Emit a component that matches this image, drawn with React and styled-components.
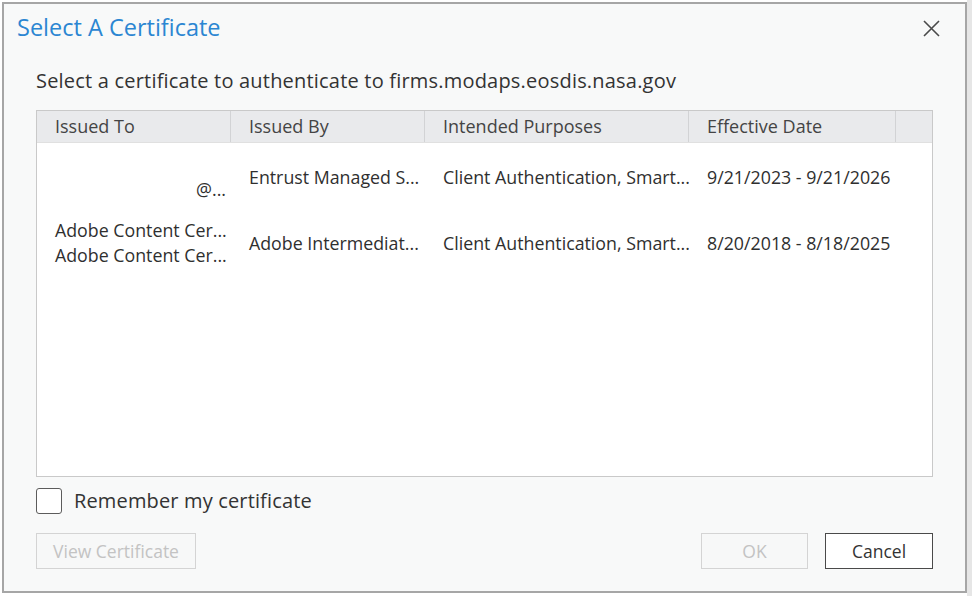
import React from "react";
import styled, { createGlobalStyle } from "styled-components";

const Global = createGlobalStyle`
  html, body { margin: 0; padding: 0; background: #ffffff; }
  body { font-family: "Open Sans", "Noto Sans", sans-serif; }
`;

const Page = styled.div`
  width: 972px;
  height: 596px;
  padding: 2px 0 0 2px;
  box-sizing: border-box;
  display: flex;
  background: linear-gradient(to right, #ffffff 967px, #e6e6e6 967px);
`;

const Dialog = styled.div`
  width: 965px;
  height: 591px;
  box-sizing: border-box;
  border: 2px solid #a6a6a6;
  background: #f8f9f9;
  display: flex;
  flex-direction: column;
  color: #333;
`;

const TitleBar = styled.div`
  display: flex;
  justify-content: space-between;
  align-items: flex-start;
  padding: 7px 24px 0 13px;
  height: 43px;
`;

const Title = styled.h1`
  margin: 0;
  font-weight: 400;
  font-size: 23.5px;
  line-height: 32px;
  color: #2b86d2;
`;

const Close = styled.button`
  border: 0;
  background: none;
  padding: 0;
  margin-top: 8px;
  width: 19px;
  height: 19px;
  display: flex;
`;

const Body = styled.div`
  padding: 0 32px;
  display: flex;
  flex-direction: column;
`;

const Prompt = styled.p`
  margin: 13px 0 0 0;
  font-size: 20px;
  line-height: 28px;
  letter-spacing: 0.2px;
  color: #333;
`;

const Table = styled.div`
  margin-top: 15px;
  height: 367px;
  box-sizing: border-box;
  border: 1px solid #c9c9c9;
  background: #ffffff;
  display: flex;
  flex-direction: column;
`;

const cols = "194px 194px 264px 207px 1fr";

const HeaderRow = styled.div`
  display: grid;
  grid-template-columns: ${cols};
  height: 31px;
  background: #e9eaec;
  border-bottom: 1px solid #e0e0e0;
`;

const HeaderCell = styled.div`
  padding-left: 18px;
  font-size: 18px;
  line-height: 31px;
  color: #444;
  border-right: ${(p) => (p.$last ? "none" : "1px solid #d2d3d5")};
  white-space: nowrap;
  overflow: hidden;
`;

const Row = styled.div`
  display: grid;
  grid-template-columns: ${cols};
  height: 66px;
  align-items: center;
  margin-top: ${(p) => (p.$first ? "1px" : "0")};
`;

const Cell = styled.div`
  padding: 0 5px 0 18px;
  font-size: 17.8px;
  line-height: 25px;
  color: #2f2f2f;
  text-align: ${(p) => (p.$right ? "right" : "left")};
  white-space: nowrap;
  overflow: hidden;
`;

const Line = styled.div`
  height: 25px;
`;

const CheckRow = styled.label`
  display: flex;
  align-items: center;
  gap: 12px;
  margin-top: 10px;
  font-size: 20px;
  letter-spacing: 0.15px;
  color: #333;
`;

const Box = styled.span`
  width: 26px;
  height: 26px;
  box-sizing: border-box;
  border: 1.5px solid #5c5c5c;
  border-radius: 3px;
  background: #fff;
`;

const Buttons = styled.div`
  display: flex;
  align-items: center;
  margin-top: 19px;
  gap: 17px;
`;

const Spacer = styled.div`
  flex: 1;
`;

const Button = styled.button`
  width: ${(p) => p.$w}px;
  height: 36px;
  box-sizing: border-box;
  font-family: inherit;
  font-size: 17.5px;
  background: ${(p) => (p.disabled ? "#f7f8f8" : "#ffffff")};
  color: ${(p) => (p.disabled ? "#c3c3c3" : "#333")};
  border: ${(p) => (p.disabled ? "1.5px solid #d4d4d4" : "1.5px solid #4a4a4a")};
  padding: 0;
`;

const rows = [
  {
    to: ["", "@..."],
    by: "Entrust Managed S...",
    purposes: "Client Authentication, Smart...",
    date: "9/21/2023 - 9/21/2026",
  },
  {
    to: ["Adobe Content Cer...", "Adobe Content Cer..."],
    by: "Adobe Intermediat...",
    purposes: "Client Authentication, Smart...",
    date: "8/20/2018 - 8/18/2025",
  },
];

export default function App() {
  return (
    <>
      <Global />
      <Page>
        <Dialog>
          <TitleBar>
            <Title>Select A Certificate</Title>
            <Close aria-label="Close">
              <svg width="19" height="19" viewBox="0 0 19 19">
                <path d="M2 2 L17 17 M17 2 L2 17" stroke="#4a4a4a" strokeWidth="1.6" fill="none" />
              </svg>
            </Close>
          </TitleBar>
          <Body>
            <Prompt>Select a certificate to authenticate to firms.modaps.eosdis.nasa.gov</Prompt>
            <Table>
              <HeaderRow>
                <HeaderCell>Issued To</HeaderCell>
                <HeaderCell>Issued By</HeaderCell>
                <HeaderCell>Intended Purposes</HeaderCell>
                <HeaderCell>Effective Date</HeaderCell>
                <HeaderCell $last />
              </HeaderRow>
              {rows.map((r, i) => (
                <Row key={i} $first={i === 0}>
                  <Cell $right>
                    {r.to.map((t, j) => (
                      <Line key={j}>{t}</Line>
                    ))}
                  </Cell>
                  <Cell>{r.by}</Cell>
                  <Cell>{r.purposes}</Cell>
                  <Cell>{r.date}</Cell>
                  <Cell />
                </Row>
              ))}
            </Table>
            <CheckRow>
              <Box />
              Remember my certificate
            </CheckRow>
            <Buttons>
              <Button $w={160} disabled>View Certificate</Button>
              <Spacer />
              <Button $w={107} disabled>OK</Button>
              <Button $w={108}>Cancel</Button>
            </Buttons>
          </Body>
        </Dialog>
      </Page>
    </>
  );
}
